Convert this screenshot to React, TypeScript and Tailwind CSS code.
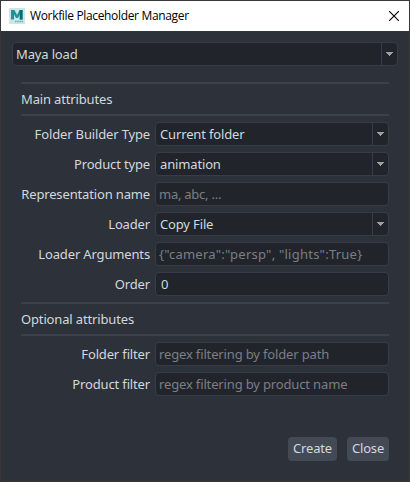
import type { ReactNode } from 'react';

function Arrow() {
  return (
    <span className="flex w-4 shrink-0 items-center justify-center border-l border-[#373d48]">
      <svg width="7" height="4" viewBox="0 0 7 4" shapeRendering="crispEdges" fill="#a09f9e">
        <path d="M0 0h7v1H0zM1 1h5v1H1zM2 2h3v1H2zM3 3h1v1H3z" />
      </svg>
    </span>
  );
}

function Combo({ value }: { value: string }) {
  return (
    <div className="flex h-6 w-full overflow-hidden rounded border border-[#373d48] bg-[#21252b]">
      <span className="flex-1 pl-[4px] leading-[22px]">{value}</span>
      <Arrow />
    </div>
  );
}

function Field({ value, placeholder, spacing = '' }: { value?: string; placeholder?: string; spacing?: string }) {
  return (
    <div className="h-6 w-full whitespace-nowrap rounded border border-[#373d48] bg-[#21252b] pl-[3px] leading-[22px]">
      {value ? (
        <span className="pl-[2px]">{value}</span>
      ) : (
        <span className={`text-[#7b7e83] ${spacing}`}>{placeholder}</span>
      )}
    </div>
  );
}

function Row({ label, children }: { label: string; children: ReactNode }) {
  return (
    <div className="flex h-6 items-center">
      <span className="w-[129px] shrink-0 whitespace-nowrap text-right leading-6">{label}</span>
      <div className="ml-[5px] flex-1">{children}</div>
    </div>
  );
}

function Heading({ children }: { children: ReactNode }) {
  return <div className="h-[34px] border-y-2 border-[#3b404c] leading-[30px]">{children}</div>;
}

export default function App() {
  return (
    <div className="flex h-[482px] w-[410px] flex-col overflow-hidden border border-[#383636] bg-[#2c313a] font-['Noto_Sans',sans-serif] text-[13px] tracking-[-0.15px] text-[#d3d8de]">
      <header className="flex h-[30px] shrink-0 items-center bg-white text-black">
        <svg className="ml-2 shrink-0" width="16" height="16" viewBox="0 0 16 16">
          <rect width="16" height="16" fill="#c9e8e8" />
          <path d="M2 2h3.500L8 7l2.500-5H13.500v9.500h-2.700V6.500L9 10H7L5 6.500v5H2z" fill="#1f9496" />
          <path d="M10.800 2h2.700v9.500h-2.700z" fill="#086d72" />
          <path d="M6 13.500h1.500m.7 0h1.500m.7 0h1.400m.7 0H14" stroke="#49b7b7" strokeWidth="1.300" />
        </svg>
        <span className="ml-[5px] whitespace-nowrap font-['Open_Sans',sans-serif] text-[12px] tracking-[-0.34px]">Workfile Placeholder Manager</span>
        <svg className="ml-auto mr-[10px]" width="10" height="10" viewBox="0 0 10 10" stroke="#000" strokeWidth="1.100">
          <path d="M0 0l10 10M10 0L0 10" />
        </svg>
      </header>
      <div className="-indent-px px-[11px] pt-[11px]">
        <Combo value="Maya load" />
      </div>
      <main className="flex flex-col gap-1.5 pl-5 pr-5 pt-4">
        <Heading>Main attributes</Heading>
        <Row label="Folder Builder Type"><Combo value="Current folder" /></Row>
        <Row label="Product type"><Combo value="animation" /></Row>
        <Row label="Representation name"><Field placeholder="ma, abc, ..." spacing="tracking-[-0.25px]" /></Row>
        <Row label="Loader"><Combo value="Copy File" /></Row>
        <Row label="Loader Arguments"><Field placeholder={'{"camera":"persp", "lights":True}'} spacing="tracking-[0.24px]" /></Row>
        <Row label="Order"><Field value="0" /></Row>
        <Heading>Optional attributes</Heading>
        <Row label="Folder filter"><Field placeholder="regex filtering by folder path" /></Row>
        <Row label="Product filter"><Field placeholder="regex filtering by product name" /></Row>
      </main>
      <footer className="mb-5 mr-5 mt-auto flex justify-end gap-2.5">
        <button className="h-6 w-[49px] rounded bg-[#434a56]">Create</button>
        <button className="h-6 w-[42px] rounded bg-[#434a56]">Close</button>
      </footer>
    </div>
  );
}
